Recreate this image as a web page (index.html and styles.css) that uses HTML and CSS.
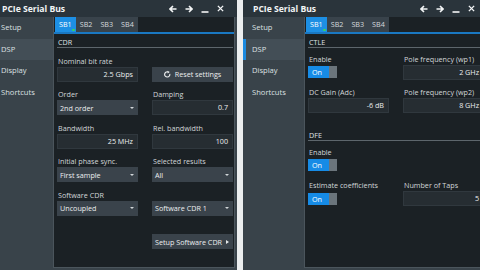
FILE: index.html
```html
<!DOCTYPE html>
<html lang="en">
<head>
    <meta charset="UTF-8">
    <meta name="viewport" content="width=device-width, initial-scale=1.0">
    <title>PCIe Serial Bus</title>
    <link rel="stylesheet" href="styles.css">
</head>
<body>
    <div class="screen">
        <!-- CDR settings -->
        <div class="window">
            <div class="titlebar">
                <span class="title">PCIe Serial Bus</span>
                <div class="win-icons">
                    <svg viewBox="0 0 8 8"><path d="M1 4H7.5M4 1L1 4L4 7" /></svg>
                    <svg viewBox="0 0 8 8"><path d="M0.5 4H7M4 1L7 4L4 7" /></svg>
                    <svg viewBox="0 0 8 8"><path d="M0.5 7H7.5" /></svg>
                    <svg class="close" viewBox="0 0 8 8"><path d="M1 1L7 7M7 1L1 7" /></svg>
                </div>
            </div>
            <div class="win-body">
                <nav class="sidebar">
                    <div class="nav-item">Setup</div>
                    <div class="nav-item selected">DSP</div>
                    <div class="nav-item">Display</div>
                    <div class="nav-item">Shortcuts</div>
                </nav>
                <div class="pane">
                    <div class="tabs">
                        <div class="tab active">SB1<span class="dot"></span></div>
                        <div class="tab">SB2</div>
                        <div class="tab">SB3</div>
                        <div class="tab">SB4</div>
                    </div>
                    <div class="section">
                        <div class="section-title">CDR</div>
                        <div class="grid">
                            <div class="field">
                                <div class="label">Nominal bit rate</div>
                                <div class="control input">2.5 Gbps</div>
                            </div>
                            <div class="field">
                                <div class="label"></div>
                                <div class="control button">
                                    <svg class="reset-icon" viewBox="0 0 8 8"><path d="M6.6 3.2A3 3 0 1 1 4.6 1.05" /><path class="fill" d="M4 -0.2L6.6 1.2L4.2 2.8Z" /></svg>
                                    Reset settings
                                </div>
                            </div>
                            <div class="field">
                                <div class="label">Order</div>
                                <div class="control select">2nd order<span class="caret"></span></div>
                            </div>
                            <div class="field">
                                <div class="label">Damping</div>
                                <div class="control input">0.7</div>
                            </div>
                            <div class="field">
                                <div class="label">Bandwidth</div>
                                <div class="control input">25 MHz</div>
                            </div>
                            <div class="field">
                                <div class="label">Rel. bandwidth</div>
                                <div class="control input">100</div>
                            </div>
                            <div class="field">
                                <div class="label">Initial phase sync.</div>
                                <div class="control select">First sample<span class="caret"></span></div>
                            </div>
                            <div class="field">
                                <div class="label">Selected results</div>
                                <div class="control select">All<span class="caret"></span></div>
                            </div>
                            <div class="field">
                                <div class="label">Software CDR</div>
                                <div class="control select">Uncoupled<span class="caret"></span></div>
                            </div>
                            <div class="field">
                                <div class="label"></div>
                                <div class="control select">Software CDR 1<span class="caret"></span></div>
                            </div>
                            <div class="field"></div>
                            <div class="field">
                                <div class="label"></div>
                                <div class="control select">Setup Software CDR<span class="caret right"></span></div>
                            </div>
                        </div>
                    </div>
                </div>
            </div>
        </div>

        <!-- CTLE / DFE settings -->
        <div class="window">
            <div class="titlebar">
                <span class="title">PCIe Serial Bus</span>
                <div class="win-icons">
                    <svg viewBox="0 0 8 8"><path d="M1 4H7.5M4 1L1 4L4 7" /></svg>
                    <svg viewBox="0 0 8 8"><path d="M0.5 4H7M4 1L7 4L4 7" /></svg>
                    <svg viewBox="0 0 8 8"><path d="M0.5 7H7.5" /></svg>
                    <svg class="close" viewBox="0 0 8 8"><path d="M1 1L7 7M7 1L1 7" /></svg>
                </div>
            </div>
            <div class="win-body">
                <nav class="sidebar">
                    <div class="nav-item">Setup</div>
                    <div class="nav-item selected">DSP</div>
                    <div class="nav-item">Display</div>
                    <div class="nav-item">Shortcuts</div>
                </nav>
                <div class="pane">
                    <div class="tabs">
                        <div class="tab active">SB1<span class="dot"></span></div>
                        <div class="tab">SB2</div>
                        <div class="tab">SB3</div>
                        <div class="tab">SB4</div>
                    </div>
                    <div class="section">
                        <div class="section-title">CTLE</div>
                        <div class="grid tight">
                            <div class="field">
                                <div class="label">Enable</div>
                                <div class="control toggle"><span class="toggle-on">On</span><span class="toggle-knob"></span></div>
                            </div>
                            <div class="field">
                                <div class="label">Pole frequency (wp1)</div>
                                <div class="control input">2 GHz</div>
                            </div>
                            <div class="field">
                                <div class="label">DC Gain (Adc)</div>
                                <div class="control input">-6 dB</div>
                            </div>
                            <div class="field">
                                <div class="label">Pole frequency (wp2)</div>
                                <div class="control input">8 GHz</div>
                            </div>
                        </div>
                    </div>
                    <div class="section">
                        <div class="section-title">DFE</div>
                        <div class="grid tight">
                            <div class="field">
                                <div class="label">Enable</div>
                                <div class="control toggle"><span class="toggle-on">On</span><span class="toggle-knob"></span></div>
                            </div>
                            <div class="field"></div>
                            <div class="field">
                                <div class="label">Estimate coefficients</div>
                                <div class="control toggle"><span class="toggle-on">On</span><span class="toggle-knob"></span></div>
                            </div>
                            <div class="field">
                                <div class="label">Number of Taps</div>
                                <div class="control input">5</div>
                            </div>
                        </div>
                    </div>
                </div>
            </div>
        </div>
    </div>
</body>
</html>
```

FILE: styles.css
```css
* {
    box-sizing: border-box;
}

body {
    margin: 0;
    width: 480px;
    height: 270px;
    overflow: hidden;
    background-color: #eceeef;
    font-family: 'Open Sans', sans-serif;
    font-size: 7.2px;
    color: #d4d8db;
}

.screen {
    display: flex;
    gap: 6px;
    margin-left: -8px;
}

.window {
    flex: none;
    width: 245px;
    height: 270px;
    display: flex;
    flex-direction: column;
    background-color: #39434a;
}

/* title bar */
.titlebar {
    flex: none;
    height: 17px;
    display: flex;
    align-items: center;
    justify-content: space-between;
    padding: 0 13px 0 10px;
    background-color: #2a343b;
}

.title {
    font-size: 8.6px;
    font-weight: bold;
    color: #f2f4f5;
}

.win-icons {
    display: flex;
    align-items: center;
    gap: 8px;
}

.win-icons svg {
    display: block;
    width: 8px;
    height: 8px;
    fill: none;
    stroke: #f4f6f7;
    stroke-width: 1.6;
}

.win-icons svg.close {
    width: 7px;
    height: 7px;
}

/* body */
.win-body {
    flex: 1;
    display: flex;
    padding: 0 2px 2px 0;
}

.sidebar {
    flex: none;
    width: 61px;
}

.nav-item {
    height: 21.5px;
    line-height: 21.5px;
    padding-left: 9px;
    font-size: 7.6px;
    color: #dce0e2;
}

.nav-item.selected {
    background-color: #434e56;
    box-shadow: inset 3px 0 0 #1b8ae0;
}

.pane {
    flex: 1;
    background-color: #1b2125;
    border: 1px solid #4b555c;
    border-top: none;
    overflow: hidden;
}

/* tabs */
.tabs {
    display: flex;
    height: 17px;
    padding-left: 1px;
    border-bottom: 2px solid #1a78c2;
}

.tab {
    position: relative;
    padding: 0 4px;
    line-height: 15px;
    background-color: #39434b;
    color: #d5d9dc;
}

.tab.active {
    background-color: #1d8fe4;
    color: #ffffff;
}

.tab .dot {
    position: absolute;
    right: 1px;
    bottom: 1px;
    width: 2.5px;
    height: 2.5px;
    border-radius: 50%;
    background-color: #3ad35e;
}

/* sections */
.section {
    margin: 3px 1px 0 3px;
}

.section + .section {
    margin-top: 9.5px;
}

.section-title {
    height: 11px;
    line-height: 10px;
    padding-left: 1px;
    border-bottom: 1px solid #5d666c;
    color: #dfe2e4;
}

.grid {
    display: grid;
    grid-template-columns: 81px 81px;
    column-gap: 14px;
    padding-top: 7.5px;
}

.grid.tight {
    padding-top: 5.5px;
}

.field {
    margin-bottom: 7.5px;
}

.label {
    height: 11px;
    line-height: 11px;
    padding-left: 1px;
    white-space: nowrap;
    color: #d2d6d9;
}

.control {
    height: 15px;
    white-space: nowrap;
    color: #eceeef;
}

.input {
    line-height: 13px;
    padding-right: 4px;
    text-align: right;
    background-color: #262d32;
    border: 1px solid #30383e;
}

.select {
    display: flex;
    align-items: center;
    justify-content: space-between;
    padding: 0 4px 0 3px;
    background-color: #3a434b;
}

.caret {
    width: 0;
    height: 0;
    border-left: 2px solid transparent;
    border-right: 2px solid transparent;
    border-top: 2.5px solid #d2d7da;
}

.caret.right {
    border-top: 2px solid transparent;
    border-bottom: 2px solid transparent;
    border-left: 3px solid #e4e7e9;
    border-right: none;
}

.button {
    display: flex;
    align-items: center;
    justify-content: center;
    gap: 4px;
    background-color: #3a434b;
}

.reset-icon {
    width: 7px;
    height: 7px;
    fill: none;
    stroke: #eef0f1;
    stroke-width: 1.3;
    overflow: visible;
}

.reset-icon .fill {
    fill: #eef0f1;
    stroke: none;
}

.toggle {
    display: flex;
    align-items: center;
}

.toggle-on {
    width: 21px;
    height: 12px;
    line-height: 12px;
    padding-left: 4px;
    background-color: #168be6;
    color: #ffffff;
}

.toggle-knob {
    width: 8px;
    height: 12px;
    background-color: #6b757c;
}
```
